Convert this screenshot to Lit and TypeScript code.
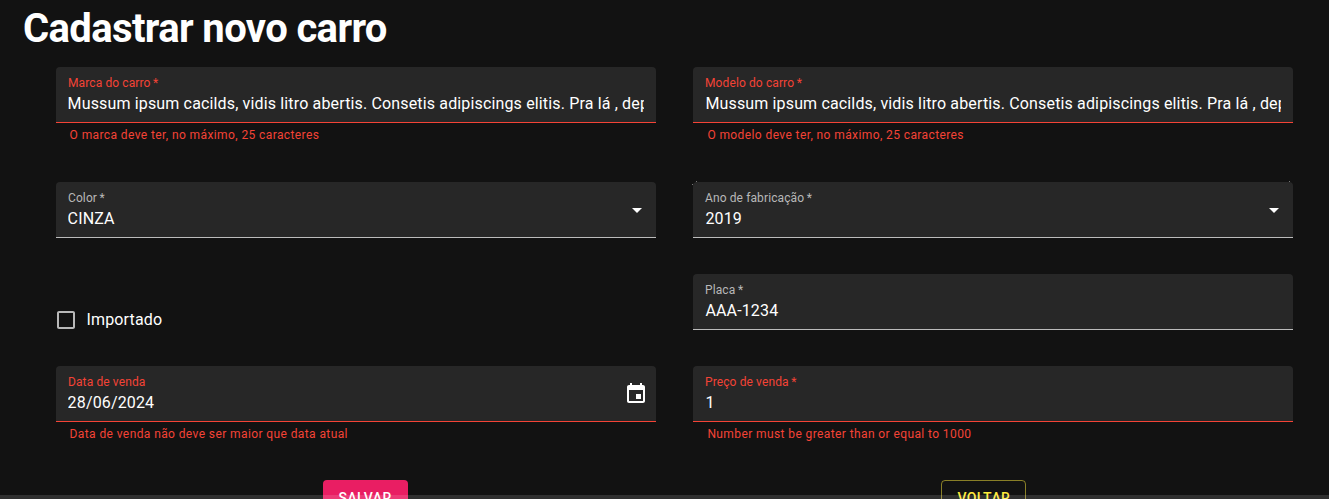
import { LitElement, html, css, nothing } from "lit";
import { customElement, property } from "lit/decorators.js";

const LOREM =
  "Mussum ipsum cacilds, vidis litro abertis. Consetis adipiscings elitis. Pra lá , depois";

@customElement("filled-field")
class FilledField extends LitElement {
  @property() label = "";
  @property() value = "";
  @property() helper = "";
  @property() icon = "";
  @property({ type: Boolean }) required = false;
  @property({ type: Boolean }) error = false;

  static styles = css`
    :host {
      display: block;
    }
    .box {
      display: flex;
      align-items: center;
      box-sizing: border-box;
      height: 56px;
      padding: 0 12px;
      background: #272727;
      border-bottom: 1px solid #bcbcbc;
      border-radius: 4px 4px 0 0;
    }
    .error .box {
      border-bottom-color: #f44336;
    }
    .text {
      flex: 1;
      min-width: 0;
      height: 55px;
      display: flex;
      flex-direction: column;
    }
    .label {
      font-size: 12px;
      line-height: 17px;
      letter-spacing: 0.1126px;
      margin-top: 8px;
      margin-left: var(--label-shift, 0);
      color: #b8b8b8;
    }
    .error .label,
    .helper {
      color: #f44336;
    }
    .value {
      font-size: 16px;
      line-height: 23px;
      letter-spacing: 0.15008px;
      overflow: hidden;
      white-space: nowrap;
      color: #fff;
    }
    .icon {
      width: 24px;
      height: 24px;
      fill: #fff;
      flex: none;
    }
    .arrow {
      margin-right: -5px;
    }
    .calendar {
      margin-right: -4px;
    }
    .helper {
      margin: 2px 14px 0;
      font-size: 12px;
      line-height: 20px;
      letter-spacing: 0.4px;
    }
  `;

  renderIcon() {
    if (this.icon === "arrow")
      return html`<svg class="icon arrow" viewBox="0 0 24 24"><path d="M7 10l5 5 5-5z" /></svg>`;
    if (this.icon === "calendar")
      return html`<svg class="icon calendar" viewBox="0 0 24 24">
        <path d="M17 12h-5v5h5v-5zM16 1v2H8V1H6v2H5c-1.11 0-1.99.9-1.99 2L3 19c0 1.1.89 2 2 2h14c1.1 0 2-.9 2-2V5c0-1.1-.9-2-2-2h-1V1h-2zm3 18H5V8h14v11z" />
      </svg>`;
    return nothing;
  }

  render() {
    return html`<div class=${this.error ? "error" : ""}>
      <div class="box">
        <div class="text">
          <div class="label">${this.label}${this.required ? "\u2009*" : ""}</div>
          <div class="value">${this.value}</div>
        </div>
        ${this.renderIcon()}
      </div>
      ${this.helper ? html`<div class="helper">${this.helper}</div>` : nothing}
    </div>`;
  }
}

@customElement("app-root")
class AppRoot extends LitElement {
  static styles = css`
    :host {
      display: block;
      position: relative;
      box-sizing: border-box;
      height: 499px;
      overflow: hidden;
      background: #121212;
      color: #fff;
      font-family: Roboto, "Liberation Sans", sans-serif;
    }
    .title {
      margin: 0;
      padding: 5px 0 0 23px;
      height: 62px;
      box-sizing: content-box;
      font-size: 40px;
      line-height: 48px;
      font-weight: 700;
      letter-spacing: -0.01562em;
    }
    .form {
      display: grid;
      grid-template-columns: 600px 600px;
      column-gap: 37.8px;
      grid-template-rows: 115px 92px 92px 114px;
      padding-left: 55.6px;
    }
    .form > :nth-child(odd) {
      --label-shift: 0.4px;
    }
    .form > :nth-child(even) {
      --label-shift: -0.4px;
    }
    .check {
      display: flex;
      align-items: center;
      height: 24px;
      margin: 34px 0 0 -1.6px;
      font-size: 16px;
      line-height: 24px;
      letter-spacing: 0.15008px;
    }
    .square {
      width: 24px;
      height: 24px;
      fill: #b8b8b8;
      margin-right: 8.5px;
    }
    .cell {
      text-align: center;
    }
    .button {
      display: inline-block;
      box-sizing: border-box;
      height: 36px;
      width: 85px;
      padding: 0;
      border: none;
      border-radius: 4px;
      font: 500 14px/36px Roboto, "Liberation Sans", sans-serif;
      letter-spacing: 0.4px;
      text-align: center;
    }
    .save {
      margin-left: 19px;
      color: #fff;
      background: #e91e63;
    }
    .back {
      margin-right: 19px;
      color: #ffeb3b;
      line-height: 34px;
      background: transparent;
      border: 1px solid rgba(255, 235, 59, 0.5);
    }
    .band {
      position: absolute;
      left: 0;
      right: 0;
      bottom: 0;
      height: 4px;
      background: rgba(255, 255, 255, 0.13);
    }
    .corners {
      position: relative;
    }
    .corners::before {
      content: "";
      position: absolute;
      left: -1px;
      top: 2px;
      width: 1px;
      height: 1px;
      background: #777;
      box-shadow: 4px -3px #777, 597px -3px #777;
    }
  `;

  render() {
    return html`
      <h1 class="title">Cadastrar novo carro</h1>
      <div class="form">
        <filled-field label="Marca do carro" required error .value=${LOREM}
          helper="O marca deve ter, no máximo, 25 caracteres"></filled-field>
        <filled-field label="Modelo do carro" required error .value=${LOREM}
          helper="O modelo deve ter, no máximo, 25 caracteres"></filled-field>
        <filled-field label="Color" required value="CINZA" icon="arrow"></filled-field>
        <filled-field class="corners" label="Ano de fabricação" required value="2019" icon="arrow"></filled-field>
        <div class="check">
          <svg class="square" viewBox="0 0 24 24">
            <path d="M19 5v14H5V5h14m0-2H5c-1.1 0-2 .9-2 2v14c0 1.1.9 2 2 2h14c1.1 0 2-.9 2-2V5c0-1.1-.9-2-2-2z" />
          </svg>
          <span>Importado</span>
        </div>
        <filled-field label="Placa" required value="AAA-1234"></filled-field>
        <filled-field label="Data de venda" error value="28/06/2024" icon="calendar"
          helper="Data de venda não deve ser maior que data atual"></filled-field>
        <filled-field label="Preço de venda" required error value="1"
          helper="Number must be greater than or equal to 1000"></filled-field>
        <div class="cell"><button class="button save">SALVAR</button></div>
        <div class="cell"><button class="button back">VOLTAR</button></div>
      </div>
      <div class="band"></div>
    `;
  }
}
